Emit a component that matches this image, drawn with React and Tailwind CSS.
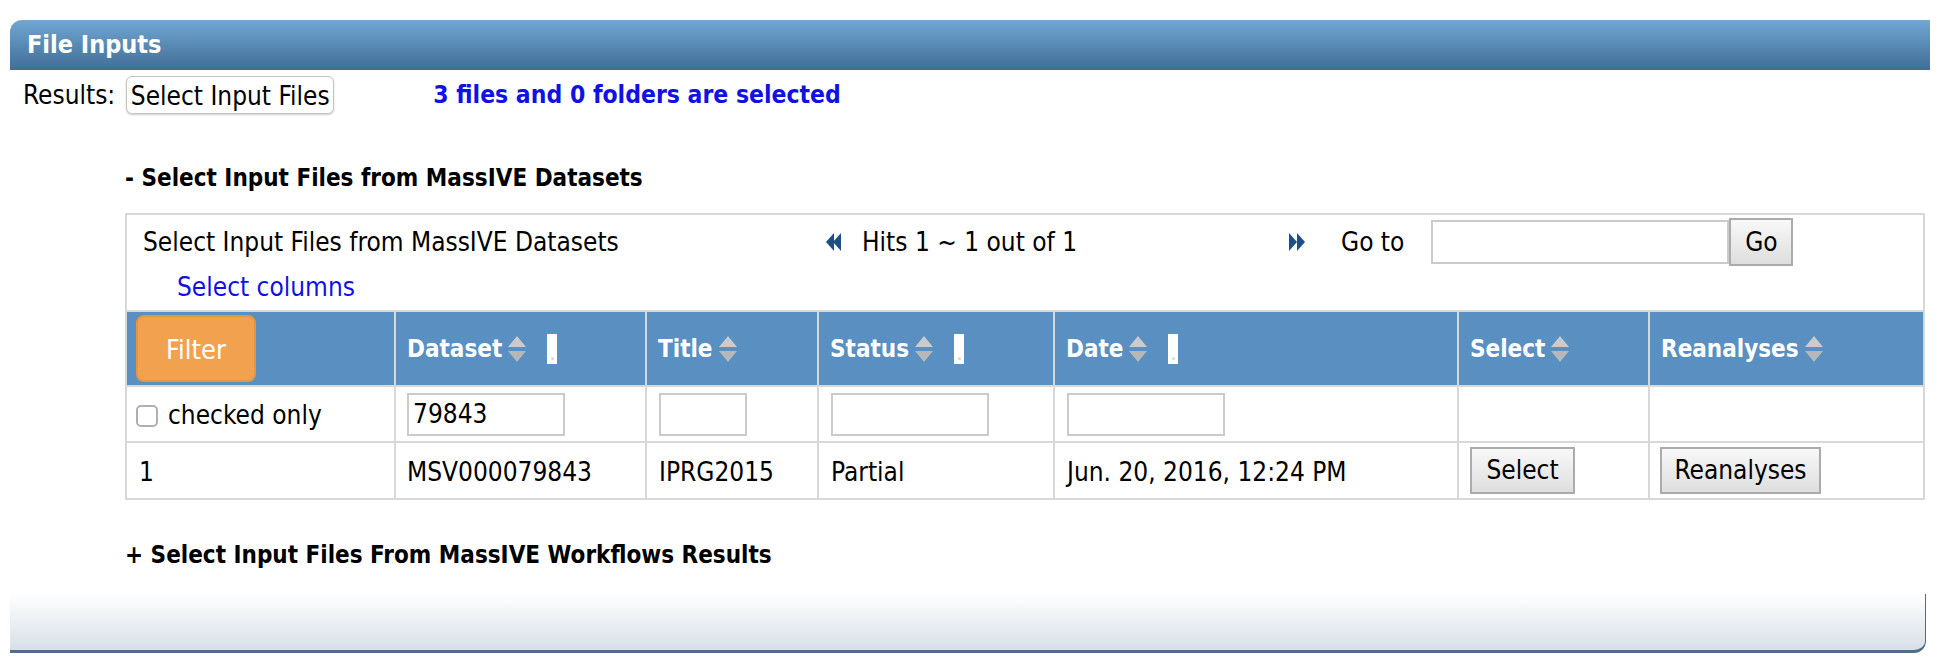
import { useState } from "react";

const font = { fontFamily: '"DejaVu Sans Condensed", "DejaVu Sans", sans-serif' };

function SortIcon() {
  return (
    <svg width="20" height="28" viewBox="0 0 20 28" className="ml-[5px] shrink-0">
      <path d="M10 1 L19 12 L1 12 Z" fill="#cbcbcb" />
      <path d="M1 16 L19 16 L10 27 Z" fill="#b7b7b7" />
    </svg>
  );
}

function Grip() {
  return (
    <div className="ml-[20px] w-[10px] h-[30px] bg-white flex items-end justify-center pb-[4px]">
      <div className="w-[3px] h-[3px] bg-[#d8d8d8] rounded-full" />
    </div>
  );
}

function ArrowLeft() {
  return (
    <svg width="16" height="20" viewBox="0 0 16 20">
      <path d="M0 10 L8 1 L8 19 Z" fill="#1d4f86" />
      <path d="M7 10 L15 1 L15 19 Z" fill="#1d4f86" />
    </svg>
  );
}

function ArrowRight() {
  return (
    <svg width="20" height="20" viewBox="0 0 20 20">
      <path d="M2 1 L10 10 L2 19 Z" fill="#1d4f86" />
      <path d="M10 1 L18 10 L10 19 Z" fill="#1d4f86" />
    </svg>
  );
}

const cols = "grid grid-cols-[269px_251px_172px_236px_404px_191px_1fr] divide-x-2 divide-[#d8d8d8]";
const grayBtn = "border-2 border-[#ababab] bg-gradient-to-b from-[#f8f8f8] to-[#dedede] text-black";
const inputCls = "h-[43px] border-2 border-[#cbcbcb] bg-white px-[4px] outline-none text-[26px]";

export default function App() {
  const [checkedOnly, setCheckedOnly] = useState(false);
  const [filters, setFilters] = useState({ dataset: "79843", title: "", status: "", date: "" });

  return (
    <div className="w-[1940px] h-[668px] bg-white text-black text-[26px] pt-[20px] overflow-hidden" style={font}>
      {/* title bar */}
      <div className="ml-[10px] w-[1920px] h-[50px] rounded-tl-[12px] bg-gradient-to-b from-[#71a7d3] to-[#416e97] flex items-center pl-[17px]">
        <span className="text-white font-bold text-[25px]">File Inputs</span>
      </div>

      <div className="mt-[6px] h-[38px] flex items-center pl-[23px]">
        <span>Results:</span>
        <button className="ml-[11px] h-[38px] w-[208px] bg-white border border-[#c4c4c4] rounded-[6px] shadow-[0_1px_2px_rgba(0,0,0,0.2)] text-[26px]">
          Select Input Files
        </button>
        <span className="ml-[99px] font-bold text-[24.5px] text-[#1111e6]">3 files and 0 folders are selected</span>
      </div>

      <div className="mt-[49px] ml-[125px] h-[30px] leading-[30px] font-bold text-[24px]">- Select Input Files from MassIVE Datasets</div>

      {/* datasets table */}
      <div className="mt-[20px] ml-[125px] w-[1800px] border-2 border-[#d8d8d8]">
        <div className="mt-[4px] h-[46px] flex items-center">
          <div className="w-[699px] pl-[16px]">Select Input Files from MassIVE Datasets</div>
          <div className="w-[461px] flex items-center">
            <ArrowLeft />
            <span className="ml-[20px]">Hits 1 ~ 1 out of 1</span>
          </div>
          <ArrowRight />
          <span className="ml-[34px]">Go to</span>
          <input className={"ml-[27px] w-[298px] h-[44px] border-2 border-[#cbcbcb] outline-none"} />
          <button className={"w-[64px] h-[48px] text-[26px] " + grayBtn}>Go</button>
        </div>
        <div className="h-[45px] flex items-center pl-[50px] text-[#1111e6]">Select columns</div>

        <div className={cols + " border-t-2 border-[#d8d8d8] bg-[#5a8fc2] h-[75px] text-white font-bold text-[24px]"}>
          <div className="flex items-center pl-[9px]">
            <button className="w-[120px] h-[67px] pt-[3px] rounded-[8px] bg-[#f2a24f] border-2 border-[#e99540] text-white font-normal text-[27px]">
              Filter
            </button>
          </div>
          <div className="flex items-center pl-[11px]">
            Dataset
            <SortIcon />
            <Grip />
          </div>
          <div className="flex items-center pl-[11px]">
            Title
            <SortIcon />
          </div>
          <div className="flex items-center pl-[11px]">
            Status
            <SortIcon />
            <Grip />
          </div>
          <div className="flex items-center pl-[11px]">
            Date
            <SortIcon />
            <Grip />
          </div>
          <div className="flex items-center pl-[11px]">
            Select
            <SortIcon />
          </div>
          <div className="flex items-center pl-[11px]">
            Reanalyses
            <SortIcon />
          </div>
        </div>

        <div className={cols + " border-t-2 border-[#d8d8d8] h-[56px]"}>
          <label className="flex items-center pl-[9px] pt-[3px]">
            <input
              type="checkbox"
              checked={checkedOnly}
              onChange={(e) => setCheckedOnly(e.target.checked)}
              className="appearance-none w-[22px] h-[22px] border-2 border-[#b0b0b0] rounded-[5px] bg-white"
            />
            <span className="ml-[10px]">checked only</span>
          </label>
          <div className="flex items-center pl-[11px]">
            <input
              className={inputCls + " w-[158px]"}
              value={filters.dataset}
              onChange={(e) => setFilters({ ...filters, dataset: e.target.value })}
            />
          </div>
          <div className="flex items-center pl-[12px]">
            <input
              className={inputCls + " w-[88px]"}
              value={filters.title}
              onChange={(e) => setFilters({ ...filters, title: e.target.value })}
            />
          </div>
          <div className="flex items-center pl-[12px]">
            <input
              className={inputCls + " w-[158px]"}
              value={filters.status}
              onChange={(e) => setFilters({ ...filters, status: e.target.value })}
            />
          </div>
          <div className="flex items-center pl-[12px]">
            <input
              className={inputCls + " w-[158px]"}
              value={filters.date}
              onChange={(e) => setFilters({ ...filters, date: e.target.value })}
            />
          </div>
          <div />
          <div />
        </div>

        <div className={cols + " border-t-2 border-[#d8d8d8] h-[57px]"}>
          <div className="flex items-center pl-[12px] pt-[3px]">1</div>
          <div className="flex items-center pl-[11px] pt-[3px]">MSV000079843</div>
          <div className="flex items-center pl-[12px] pt-[3px]">IPRG2015</div>
          <div className="flex items-center pl-[12px] pt-[3px]">Partial</div>
          <div className="flex items-center pl-[12px] pt-[3px]">Jun. 20, 2016, 12:24 PM</div>
          <div className="flex items-center pl-[11px]">
            <button className={"w-[105px] h-[47px] text-[26px] " + grayBtn}>Select</button>
          </div>
          <div className="flex items-center pl-[10px]">
            <button className={"w-[161px] h-[47px] text-[26px] " + grayBtn}>Reanalyses</button>
          </div>
        </div>
      </div>

      <div className="mt-[40px] ml-[125px] h-[30px] leading-[30px] font-bold text-[24px]">+ Select Input Files From MassIVE Workflows Results</div>

      {/* footer */}
      <div className="mt-[24px] ml-[10px] w-[1916px] h-[59px] bg-gradient-to-b from-white to-[#d8dfe7] border-b-[3px] border-r border-[#4f6d88] rounded-br-[12px]" />
    </div>
  );
}
